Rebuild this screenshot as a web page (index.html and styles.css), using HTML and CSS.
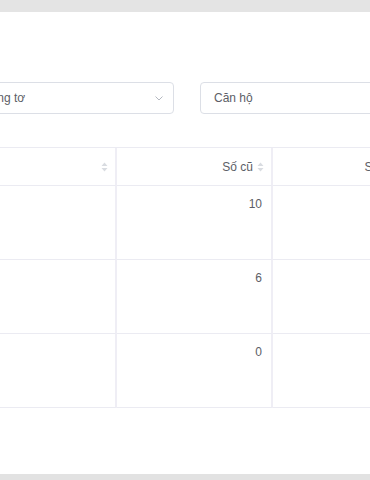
FILE: index.html
```html
<!DOCTYPE html>
<html lang="vi">
<head>
    <meta charset="UTF-8">
    <meta name="viewport" content="width=device-width, initial-scale=1.0">
    <title>Chỉ số công tơ</title>
    <link rel="stylesheet" href="styles.css">
</head>
<body>
    <div class="topbar"></div>
    <div class="card">
        <div class="filters">
            <div class="select select-meter">
                <span>Công tơ</span>
                <svg class="chevron" width="8" height="5" viewBox="0 0 8 5"><path d="M0.5 0.5 L4 4 L7.5 0.5" fill="none" stroke="#b4b8c0" stroke-width="1"/></svg>
            </div>
            <div class="select">
                <span>Căn hộ</span>
            </div>
        </div>

        <div class="grid">
            <div class="cell head">
                <svg class="sort" width="7" height="10" viewBox="0 0 7 10"><path d="M3.5 0.5 L6.5 4 L0.5 4 Z M3.5 9.5 L6.5 6 L0.5 6 Z" fill="#d9dce1"/></svg>
            </div>
            <div class="cell head">
                Số cũ
                <svg class="sort" width="7" height="10" viewBox="0 0 7 10"><path d="M3.5 0.5 L6.5 4 L0.5 4 Z M3.5 9.5 L6.5 6 L0.5 6 Z" fill="#d9dce1"/></svg>
            </div>
            <div class="cell head">
                Số mới
                <svg class="sort" width="7" height="10" viewBox="0 0 7 10"><path d="M3.5 0.5 L6.5 4 L0.5 4 Z M3.5 9.5 L6.5 6 L0.5 6 Z" fill="#d9dce1"/></svg>
            </div>

            <div class="cell row"></div>
            <div class="cell row">10</div>
            <div class="cell row"></div>

            <div class="cell row"></div>
            <div class="cell row">6</div>
            <div class="cell row"></div>

            <div class="cell row"></div>
            <div class="cell row">0</div>
            <div class="cell row"></div>
        </div>
    </div>
</body>
</html>
```

FILE: styles.css
```css
body { margin: 0; width: 370px; height: 480px; overflow: hidden; background: #e2e2e2; font-family: "Liberation Sans", Arial, sans-serif; font-size: 12px; color: #5c5e66; }
.topbar { height: 12px; background: #e4e4e4; }
.card { height: 462px; background: #fff; overflow: hidden; }
.filters { display: flex; gap: 26px; margin-left: -26px; padding-top: 70px; }
.select { flex: 0 0 200px; height: 32px; box-sizing: border-box; border: 1px solid #dcdfe6; border-radius: 4px; padding: 0 10px 0 13px; display: flex; align-items: center; justify-content: space-between; }
.select-meter { padding-left: 7px; }
.grid { display: grid; grid-template-columns: 202px 156px 150px; margin-left: -85px; margin-top: 33px; border-top: 1px solid #ebebf2; width: max-content; }
.cell { box-sizing: border-box; border-right: 2px solid #efeef5; border-bottom: 1px solid #ebebf2; text-align: right; }
.head { height: 38px; padding-right: 7px; display: flex; align-items: center; justify-content: flex-end; gap: 4px; }
.row { height: 74px; padding: 11px 9px 0 0; line-height: 14px; }
```
